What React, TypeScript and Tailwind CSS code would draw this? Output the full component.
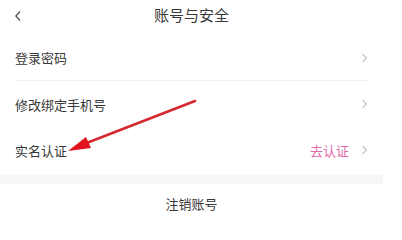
import React from "react";

const Chevron = () => (
  <svg width="8" height="12" viewBox="0 0 8 12" className="shrink-0">
    <path d="M1.5 2 L5.5 6 L1.5 10" fill="none" stroke="#c4c4c4" strokeWidth="1.1" />
  </svg>
);

export default function App() {
  return (
    <div
      className="relative w-[402px] h-[214px] overflow-hidden bg-white text-[#383838]"
      style={{ fontFamily: '"Noto Sans CJK SC", "Noto Sans", sans-serif' }}
    >
      <div className="w-[383px]">
        <div className="relative flex h-[32px] items-center justify-center pb-[3px]">
          <svg width="8" height="12" viewBox="0 0 8 12" className="absolute left-[14px] top-[10px]">
            <path d="M6 1.5 L1.8 6 L6 10.5" fill="none" stroke="#444" strokeWidth="1.1" />
          </svg>
          <span className="text-[15px] leading-none">账号与安全</span>
        </div>
        <div className="mx-[14px] flex h-[49px] items-center justify-between border-b border-[#f2f2f2] pt-[3px]">
          <span className="pl-[1px] text-[13px] leading-none">登录密码</span>
          <Chevron />
        </div>
        <div className="mx-[14px] flex h-[46px] items-center justify-between">
          <span className="pl-[1px] text-[13px] leading-none">修改绑定手机号</span>
          <Chevron />
        </div>
        <div className="mx-[14px] flex h-[48px] items-center justify-between pb-[2px]">
          <span className="pl-[1px] text-[13px] leading-none">实名认证</span>
          <div className="flex items-center gap-[12px]">
            <span className="text-[13px] leading-none text-[#df6aa8]">去认证</span>
            <Chevron />
          </div>
        </div>
        <div className="h-[9px] bg-[#f6f6f6]" />
        <div className="flex h-[38px] items-center justify-center">
          <span className="text-[13px] leading-none">注销账号</span>
        </div>
      </div>
      <svg className="absolute left-0 top-0" width="402" height="214" viewBox="0 0 402 214">
        <line x1="195" y1="101" x2="84" y2="144" stroke="#d42a2f" strokeWidth="2.6" strokeLinecap="round" />
        <polygon points="68,151 86,137 91,148" fill="#e0141c" />
      </svg>
    </div>
  );
}
